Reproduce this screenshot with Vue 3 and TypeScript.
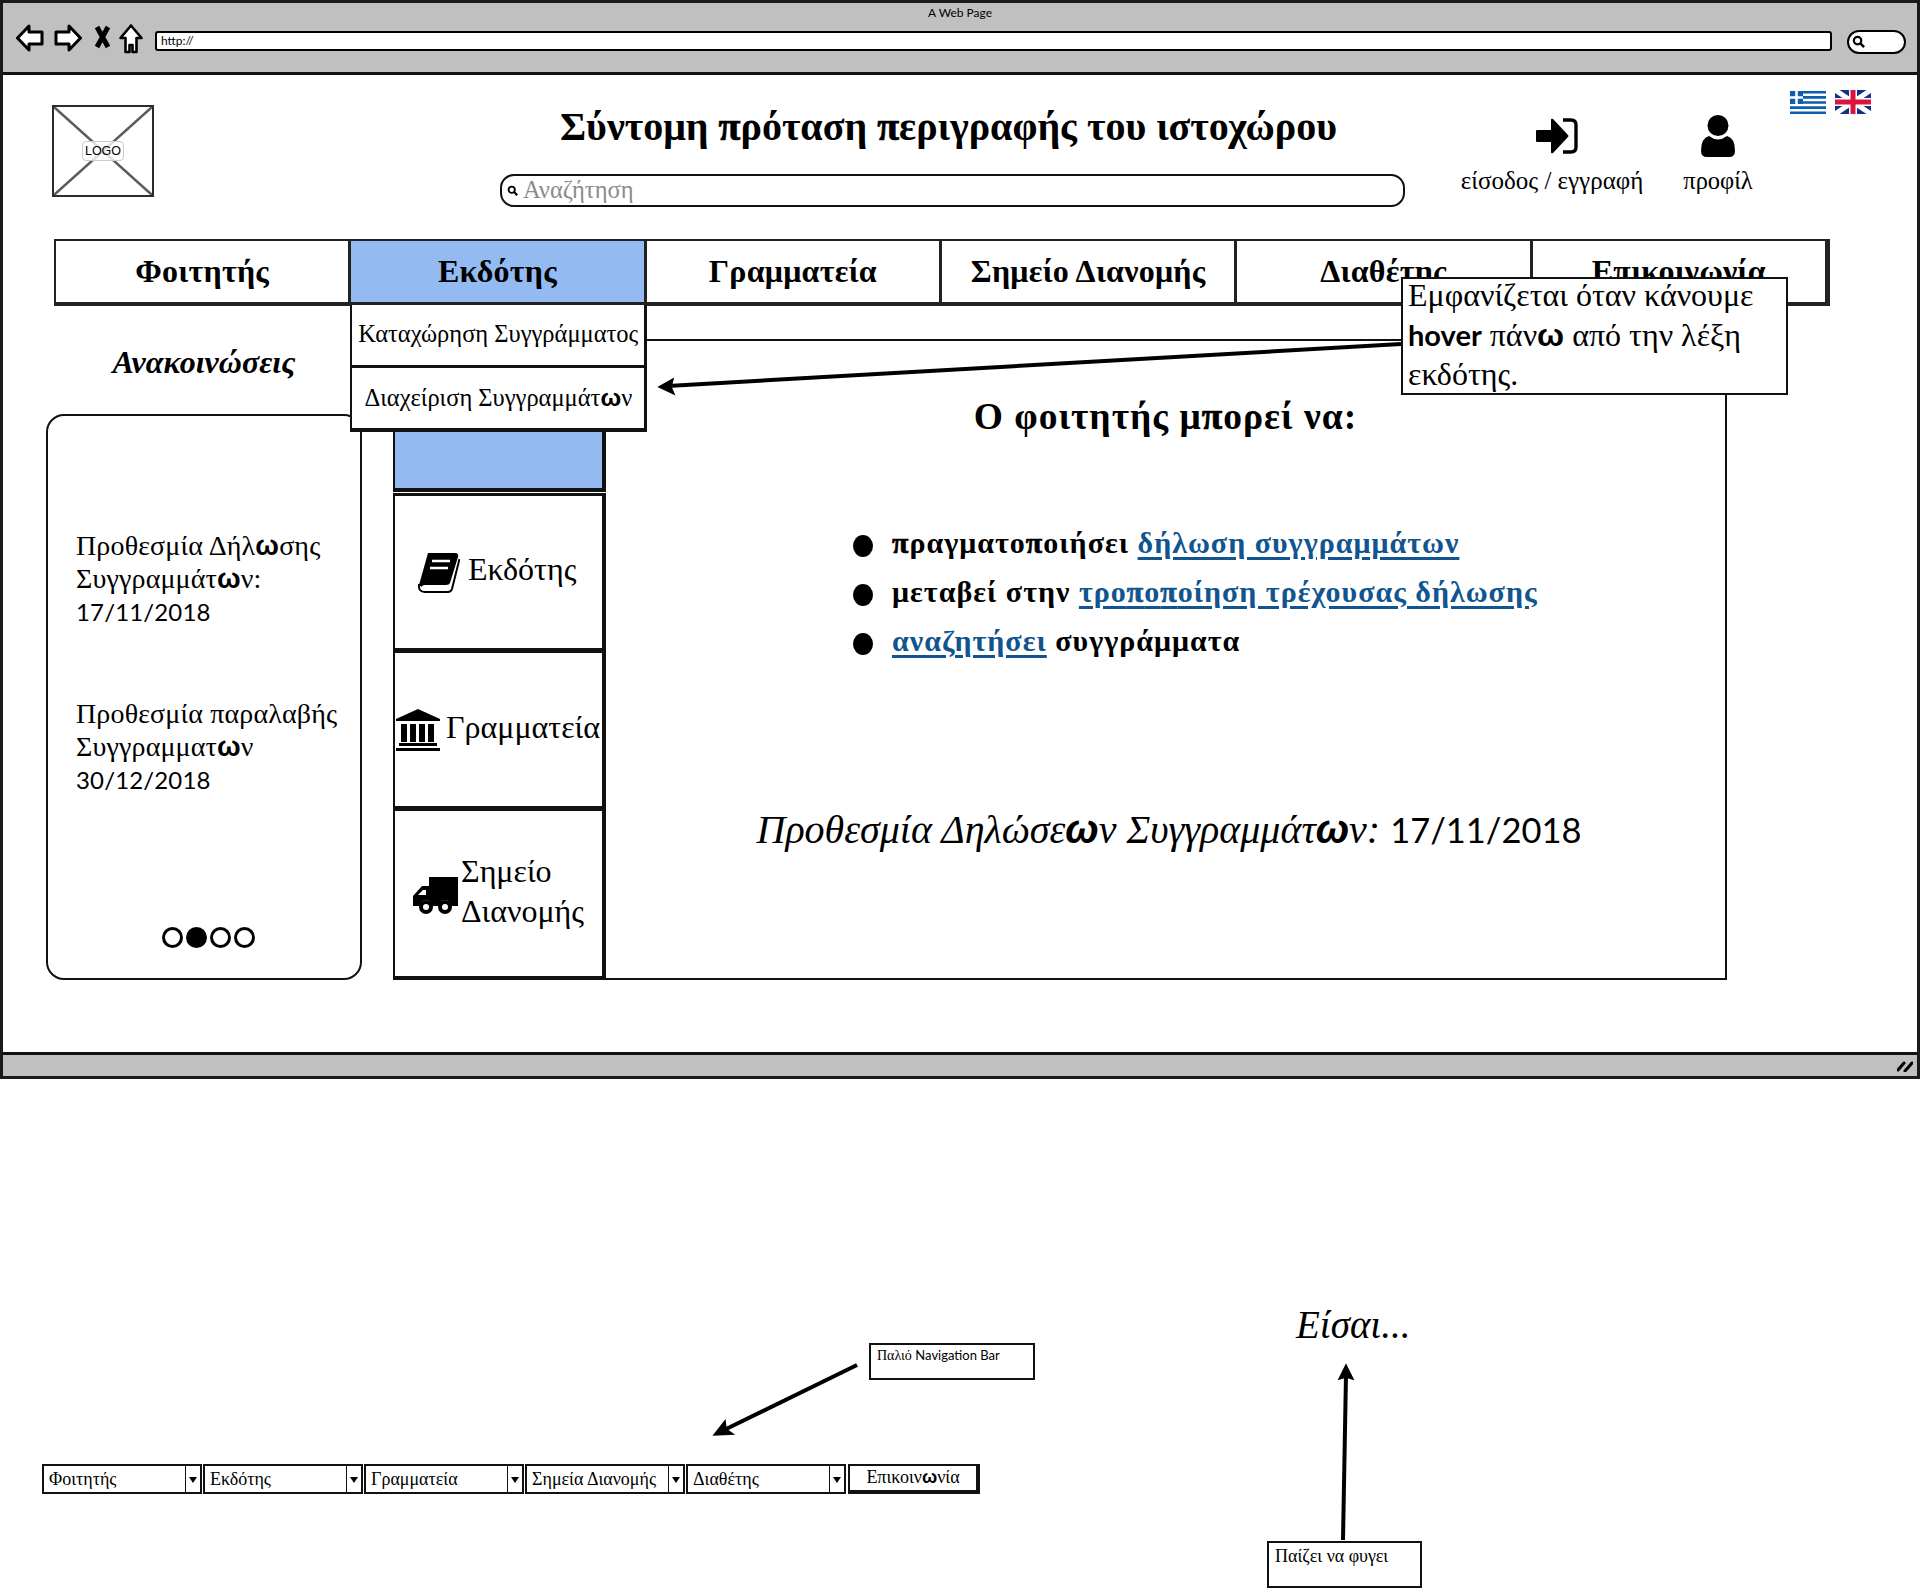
<script setup lang="ts">
const navItems: string[] = ['Φοιτητής', 'Εκδότης', 'Γραμματεία', 'Σημείο Διανομής', 'Διαθέτης', 'Επικοινωνία']
const combos: string[] = ['Φοιτητής', 'Εκδότης', 'Γραμματεία', 'Σημεία Διανομής', 'Διαθέτης']
const dots: boolean[] = [false, true, false, false]
</script>

<template>
  <div class="page">
    <section class="window">
      <header class="chrome">
        <div class="chrome-title">A Web Page</div>
        <div class="chrome-row">
          <svg class="ic-back" viewBox="0 0 28 28"><path d="M1.5 14 L13 2 V8 H26 V20 H13 V26 Z" fill="#fff" stroke="#000" stroke-width="3" stroke-linejoin="round" /></svg>
          <svg class="ic-fwd" viewBox="0 0 28 28"><path d="M26.5 14 L15 2 V8 H2 V20 H15 V26 Z" fill="#fff" stroke="#000" stroke-width="3" stroke-linejoin="round" /></svg>
          <svg class="ic-x" viewBox="0 0 16 24"><path d="M2.5 2 L13.5 22 M13.5 2 L2.5 22" stroke="#000" stroke-width="5" fill="none" /></svg>
          <svg class="ic-home" viewBox="0 0 24 30"><path d="M12 1.5 L22.5 14 H17.5 V28 H13.5 V21 H10.5 V28 H6.5 V14 H1.5 Z" fill="#fff" stroke="#000" stroke-width="2.6" stroke-linejoin="round" /></svg>
          <div class="url">http://</div>
          <div class="pill">
            <svg viewBox="0 0 14 14"><circle cx="6" cy="6" r="4" fill="none" stroke="#000" stroke-width="2.4" /><path d="M9 9 L13 13" stroke="#000" stroke-width="2.8" /></svg>
          </div>
        </div>
      </header>

      <main class="content">
        <div class="masthead">
          <div class="logo">
            <svg viewBox="0 0 98 88" preserveAspectRatio="none"><path d="M0 0 L98 88 M98 0 L0 88" stroke="#5c5c5c" stroke-width="2.5" /></svg>
            <span>LOGO</span>
          </div>
          <div class="title-col">
            <h1>Σύντομη <b class="p">π</b>ρόταση <b class="p">π</b>εριγραφής του ιστοχώρου</h1>
            <div class="search">
              <svg viewBox="0 0 14 14"><circle cx="6" cy="6" r="4" fill="none" stroke="#000" stroke-width="2.4" /><path d="M9 9 L13 13" stroke="#000" stroke-width="2.8" /></svg>
              <span>Αναζήτηση</span>
            </div>
          </div>
          <div class="action login">
            <svg viewBox="0 0 42 36"><path d="M0 13 a1 1 0 0 1 1-1 H15 V2 Q15 0 17 1 L32 17 Q33 18 32 19 L17 35 Q15 36 15 34 V24 H1 a1 1 0 0 1 -1 -1 Z" fill="#000" /><path d="M27 2 H35 Q40 2 40 7 V29 Q40 34 35 34 H27" fill="none" stroke="#000" stroke-width="3.4" /></svg>
            <span>είσοδος / εγγραφή</span>
          </div>
          <div class="action profile">
            <svg viewBox="0 0 34 42"><circle cx="17" cy="10.5" r="10.5" fill="#000" /><path d="M8 21 Q17 28 26 21 Q34 23 34 36 Q34 42 28 42 H6 Q0 42 0 36 Q0 23 8 21 Z" fill="#000" /></svg>
            <span>προφίλ</span>
          </div>
          <div class="flags">
            <svg viewBox="0 0 36 23" class="flag-gr">
              <rect width="36" height="23" fill="#fff" />
              <path d="M0 1.3 H36 M0 6.4 H36 M0 11.5 H36 M0 16.6 H36 M0 21.7 H36" stroke="#0d5eaf" stroke-width="2.6" />
              <rect width="13" height="13" fill="#0d5eaf" />
              <path d="M6.5 0 V13 M0 6.5 H13" stroke="#fff" stroke-width="2.6" />
            </svg>
            <svg viewBox="0 0 36 24" class="flag-uk">
              <rect width="36" height="24" fill="#12308a" />
              <path d="M0 0 L36 24 M36 0 L0 24" stroke="#fff" stroke-width="5" />
              <path d="M18 0 V24 M0 12 H36" stroke="#fff" stroke-width="8" />
              <path d="M18 0 V24 M0 12 H36" stroke="#d8163c" stroke-width="5" />
            </svg>
          </div>
        </div>

        <nav class="nav">
          <div v-for="item in navItems" :key="item" class="nav-item" :class="{ active: item === 'Εκδότης' }">
            {{ item }}
            <div v-if="item === 'Εκδότης'" class="dropdown">
              <div class="drop-row">Καταχώρηση Συγγράμματος</div>
              <div class="drop-row">Διαχείριση Συγγραμμάτ<b class="w">ω</b>ν</div>
            </div>
          </div>
        </nav>

        <div class="body">
          <aside class="news">
            <h2>Ανακοινώσεις</h2>
            <div class="panel">
              <p class="notice">Προθεσμία Δήλ<b class="w">ω</b>σης<br />Συγγραμμάτ<b class="w">ω</b>ν:<br /><span class="num">17/11/2018</span></p>
              <p class="notice second">Προθεσμία παραλαβής<br />Συγγραμματ<b class="w">ω</b>ν<br /><span class="num">30/12/2018</span></p>
              <div class="dots">
                <i v-for="(on, i) in dots" :key="i" :class="{ on }"></i>
              </div>
            </div>
          </aside>

          <div class="side">
            <div class="side-active"></div>
            <div class="side-row r1">
              <svg class="ic-book" viewBox="0 0 42 41"><path d="M10 1 H37 Q41 1 40 5 L32 31 Q31 33 28 33 H7 Q4 33 3.5 35 L1 33 Z" fill="#000" /><path d="M1 32 Q0 40 7 40 H30 Q33 40 34 37 L41.5 7" fill="none" stroke="#000" stroke-width="2" /><path d="M14 9 H32 M12 16 H30" stroke="#fff" stroke-width="2.6" /></svg>
              <span>Εκδότης</span>
            </div>
            <div class="side-row r2">
              <svg class="ic-bank" viewBox="0 0 44 42"><path d="M22 0 L44 10 V12 H0 V10 Z" fill="#000" /><path d="M5 15 H11 V33 H5 Z M14 15 H20 V33 H14 Z M23 15 H29 V33 H23 Z M32 15 H38 V33 H32 Z" fill="#000" /><path d="M3 34 H41 V37 H3 Z M0 39 H44 V42 H0 Z" fill="#000" /></svg>
              <span>Γραμματεία</span>
            </div>
            <div class="side-row r3">
              <svg class="ic-truck" viewBox="0 0 45 37"><path d="M16 0 H45 V29 H38 A6 6 0 0 0 26 29 H19 A6 6 0 0 0 7 29 H0 V19 L9 9 H16 Z" fill="#000" /><path d="M5 18 L10 13 H13 V18 Z" fill="#fff" /><circle cx="13" cy="30" r="5" fill="#fff" stroke="#000" stroke-width="4" /><circle cx="32" cy="30" r="5" fill="#fff" stroke="#000" stroke-width="4" /></svg>
              <span>Σημείο<br />Διανομής</span>
            </div>
          </div>

          <article class="main">
            <h2>Ο φοιτητής μ<b class="p">π</b>ορεί να:</h2>
            <ul>
              <li><i></i><span><b class="p">π</b>ραγματο<b class="p">π</b>οιήσει <a>δήλωση συγγραμμάτων</a></span></li>
              <li><i></i><span>μεταβεί στην <a>τρο<b class="p">π</b>ο<b class="p">π</b>οίηση τρέχουσας δήλωσης</a></span></li>
              <li><i></i><span><a>αναζητήσει</a> συγγράμματα</span></li>
            </ul>
            <p class="deadline">Προθεσμία Δηλώσε<b class="w">ω</b>ν Συγγραμμάτ<b class="w">ω</b>ν: <span class="num">17/11/2018</span></p>
          </article>
        </div>
      </main>

      <footer class="status">
        <svg viewBox="0 0 16 12"><path d="M1 10 L7 3 M8 11 L15 3" stroke="#000" stroke-width="3" stroke-linecap="round" /></svg>
      </footer>
    </section>

    <section class="below">
      <div class="old-nav">
        <div v-for="c in combos" :key="c" class="combo">
          <span>{{ c }}</span>
          <i></i>
        </div>
        <div class="old-btn">Επικοιν<b class="w">ω</b>νία</div>
      </div>
    </section>

    <div class="tooltip"><div class="tip-text">Εμφανίζεται όταν κάνουμε<br /><span class="sans">hover</span> πάν<b class="w">ω</b> από την λέξη<br />εκδότης.</div></div>
    <div class="note note-old">Παλιό <span class="sans-n">Navigation Bar</span></div>
    <div class="note note-leave">Παίζει να φυγει</div>
    <div class="youare">Είσαι...</div>

    <svg class="arrows" viewBox="0 0 1920 1589">
      <path d="M1401 344 L668 386" stroke="#000" stroke-width="4" fill="none" />
      <path d="M659 387 L673 379 L671 387 L674 394 Z" fill="#000" stroke="#000" stroke-width="1.5" />
      <path d="M857 1365 L722 1431" stroke="#000" stroke-width="4" fill="none" />
      <path d="M714 1435 L725 1421 L726 1429 L733 1434 Z" fill="#000" stroke="#000" stroke-width="1.5" />
      <path d="M1343 1540 L1346 1374" stroke="#000" stroke-width="4" fill="none" />
      <path d="M1346 1365 L1353 1379 L1346 1377 L1339 1379 Z" fill="#000" stroke="#000" stroke-width="1.5" />
    </svg>
  </div>
</template>

<style scoped>
.page {
  position: relative;
  width: 1920px;
  height: 1589px;
  overflow: hidden;
  background: #fff;
  color: #000;
  font-family: "Liberation Serif", "Times New Roman", serif;
}
h1, h2, p, ul { margin: 0; padding: 0; }
.w { font-family: "Liberation Sans", sans-serif; font-weight: 700; }
.p { -webkit-text-stroke: 0.7px currentColor; }
.num { font-family: "Lato", "Liberation Sans", sans-serif; font-style: normal; }

.window {
  box-sizing: border-box;
  width: 1920px;
  height: 1079px;
  border: 3px solid #1a1a1a;
  display: flex;
  flex-direction: column;
}
.chrome {
  position: relative;
  height: 69px;
  flex: none;
  background: #c0c0c0;
  border-bottom: 3px solid #111;
}
.chrome-title {
  text-align: center;
  font: 12px/14px "Lato", "Liberation Sans", sans-serif;
  padding-top: 3px;
}
.chrome-row {
  display: flex;
  align-items: flex-start;
  padding: 4px 11px 0 13px;
  height: 32px;
}
.ic-back { width: 28px; height: 28px; }
.ic-fwd { width: 28px; height: 28px; margin-left: 10px; }
.ic-x { width: 17px; height: 24px; margin-left: 12px; margin-top: 1px; }
.ic-home { width: 24px; height: 30px; margin-left: 8px; }
.url {
  box-sizing: border-box;
  width: 1677px;
  height: 20px;
  margin-left: 12px;
  margin-top: 7px;
  background: #fff;
  border: 2.5px solid #000;
  border-radius: 3px;
  font: 12px/15px "Lato", "Liberation Sans", sans-serif;
  padding-left: 4px;
}
.pill {
  box-sizing: border-box;
  width: 59px;
  height: 24px;
  margin-left: 15px;
  margin-top: 6px;
  background: #fff;
  border: 2.5px solid #000;
  border-radius: 12px;
  padding: 3px 0 0 3px;
}
.pill svg { display: block; width: 13px; height: 13px; }

.content { flex: 1; min-height: 0; }

.masthead { display: flex; height: 164px; padding-left: 49px; }
.logo {
  position: relative;
  box-sizing: border-box;
  width: 102px;
  height: 92px;
  margin-top: 30px;
  border: 2.5px solid #2c2c2c;
  display: flex;
  align-items: center;
  justify-content: center;
}
.logo svg { position: absolute; inset: 0; width: 100%; height: 100%; }
.logo span {
  position: relative;
  font: 12.5px/18px "Liberation Sans", sans-serif;
  padding: 0 2px;
  background: rgba(255, 255, 255, 0.8);
  border: 1px solid #ccc;
  border-radius: 4px;
}
.title-col { width: 905px; margin-left: 346px; }
h1 {
  text-align: center;
  font-size: 40px;
  line-height: 46px;
  font-weight: 700;
  margin-top: 29px;
  margin-right: 8px;
}
.search {
  box-sizing: border-box;
  height: 33px;
  margin-top: 24px;
  border: 2.5px solid #111;
  border-radius: 14px;
  display: flex;
  align-items: center;
  padding-left: 5px;
}
.search svg { width: 11px; height: 11px; margin-right: 5px; }
.search span { font-size: 24.5px; line-height: 28px; color: #8b8b8b; margin-top: -2px; }
.action { display: flex; flex-direction: column; align-items: center; font-size: 25px; line-height: 30px; white-space: nowrap; }
.login { width: 186px; margin-left: 54px; padding-top: 43px; }
.login svg { width: 42px; height: 36px; margin-bottom: 12px; margin-left: 10px; }
.profile { width: 70px; margin-left: 38px; padding-top: 40px; font-size: 24.5px; }
.profile svg { width: 34px; height: 42px; margin-bottom: 9px; }
.flags { display: flex; gap: 9px; margin-left: 37px; padding-top: 15px; align-items: flex-start; }
.flag-gr { width: 36px; height: 23px; margin-top: 1px; }
.flag-uk { width: 36px; height: 24px; }

.nav { display: flex; margin-left: 51px; width: 1776px; height: 67px; }
.nav-item {
  position: relative;
  box-sizing: border-box;
  flex: 1;
  border: 2px solid #222;
  border-bottom-width: 4px;
  text-align: center;
  font-size: 32px;
  line-height: 60px;
  font-weight: 700;
  letter-spacing: 0.25px;
}
.nav-item + .nav-item { border-left-width: 1px; }
.nav-item:last-child { border-right-width: 5px; }
.nav-item.active { background: #93baf1; }
.dropdown {
  position: absolute;
  z-index: 2;
  left: -1px;
  top: 100%;
  margin-top: 3px;
  width: 297px;
  box-sizing: border-box;
  background: #fff;
  border-right: 3.5px solid #111;
  border-left: 2px solid #111;
  border-bottom: 4px solid #111;
  font-size: 24.5px;
  font-weight: 400;
  letter-spacing: 0;
}
.drop-row { height: 60px; line-height: 58px; white-space: nowrap; }
.drop-row + .drop-row { border-top: 3px solid #111; height: 63px; line-height: 60px; box-sizing: border-box; }

.body { display: flex; padding-left: 43px; height: 674px; }
.news { width: 316px; flex: none; display: flex; flex-direction: column; }
.news h2 {
  height: 108px;
  text-align: center;
  font-size: 32px;
  line-height: 112px;
  font-style: italic;
  font-weight: 700;
}
.panel {
  position: relative;
  flex: 1;
  box-sizing: border-box;
  border: 2px solid #111;
  border-radius: 18px;
  padding: 113px 0 0 28px;
}
.notice { font-size: 28px; line-height: 33px; letter-spacing: 0.15px; }
.notice .num { font-size: 24px; }
.notice.second { margin-top: 69px; }
.dots {
  position: absolute;
  left: 114px;
  bottom: 30px;
  display: flex;
  gap: 3px;
}
.dots i {
  box-sizing: border-box;
  width: 21px;
  height: 21px;
  border: 3px solid #000;
  border-radius: 50%;
}
.dots i.on { background: #000; }

.side { width: 213px; margin-left: 31px; flex: none; margin-top: 99px; }
.side-active {
  box-sizing: border-box;
  height: 87px;
  background: #93baf1;
  border-right: 4px solid #111;
  border-left: 2px solid #111;
  border-bottom: 4px solid #111;
}
.side-row {
  box-sizing: border-box;
  display: flex;
  align-items: center;
  font-size: 32px;
  line-height: 40px;
  border: 2px solid #111;
  border-top-width: 3px;
  border-right-width: 4px;
}
.r1 { height: 157px; padding-left: 23px; margin-top: 1px; }
.r2 { height: 158px; padding-left: 1px; }
.r3 { height: 172px; padding-left: 18px; border-bottom-width: 4px; }
.ic-book { width: 42px; height: 41px; margin-right: 8px; }
.ic-bank { width: 44px; height: 42px; margin-right: 6px; flex: none; }
.ic-truck { width: 45px; height: 37px; margin-right: 3px; margin-top: 3px; flex: none; }
.r1 span, .r2 span { margin-top: -6px; white-space: nowrap; }
.r3 span { margin-top: -5px; }

.main {
  flex: 1;
  max-width: 1121px;
  box-sizing: border-box;
  margin-top: 33px;
  height: 641px;
  border: 2.5px solid #111;
  border-left: 0;
}
.main h2 {
  text-align: center;
  font-size: 37.5px;
  line-height: 44px;
  font-weight: 700;
  letter-spacing: 1px;
  margin-top: 54px;
}
.main ul { list-style: none; margin: 82px 0 0 247px; }
.main li {
  display: flex;
  align-items: center;
  font-size: 30px;
  line-height: 44px;
  font-weight: 700;
  letter-spacing: 1px;
  white-space: pre;
  margin-bottom: 5px;
}
.main li i {
  width: 20px;
  height: 22px;
  border-radius: 50%;
  background: #000;
  margin: 5px 19px 0 0;
}
.main a { color: #10558f; text-decoration: underline; text-decoration-thickness: 2.5px; text-underline-offset: 4px; }
.deadline {
  text-align: center;
  font-size: 40px;
  line-height: 50px;
  font-style: italic;
  margin-top: 141px;
  padding-left: 7px;
}
.deadline .num { font-size: 34.5px; }

.status {
  position: relative;
  flex: none;
  height: 21px;
  background: #c0c0c0;
  border-top: 3px solid #111;
}
.status svg { position: absolute; right: 4px; top: 5px; width: 16px; height: 12px; }

.old-nav { display: flex; margin: 385px 0 0 42px; }
.combo {
  box-sizing: border-box;
  display: flex;
  justify-content: space-between;
  width: 160px;
  height: 30px;
  margin-right: 1px;
  border: 2px solid #111;
  font-size: 18px;
  line-height: 26px;
  padding-left: 5px;
  position: relative;
}
.combo i {
  width: 14px;
  border-left: 1.5px solid #111;
  position: relative;
}
.combo i::after {
  content: '';
  position: absolute;
  left: 3px;
  top: 11px;
  border: 4.5px solid transparent;
  border-top: 6px solid #000;
  border-bottom: 0;
}
.old-btn {
  box-sizing: border-box;
  width: 132px;
  height: 30px;
  margin-left: 1px;
  border: 2px solid #111;
  border-bottom-width: 4px;
  border-right-width: 4px;
  text-align: center;
  font-size: 18px;
  line-height: 22px;
}

.tooltip {
  position: absolute;
  z-index: 3;
  left: 1401px;
  top: 277px;
  box-sizing: border-box;
  width: 387px;
  height: 118px;
  padding: 2px 0 0 5px;
  background: #fff;
  border: 2px solid #111;
  font-size: 32px;
  line-height: 39px;
  white-space: nowrap;
}
.tip-text { margin-top: -5px; }
.sans { font-family: "Lato", "Liberation Sans", sans-serif; font-size: 29px; font-weight: 700; }
.note {
  position: absolute;
  box-sizing: border-box;
  background: #fff;
  border: 2px solid #111;
  white-space: nowrap;
}
.note-old {
  left: 869px;
  top: 1343px;
  width: 166px;
  height: 37px;
  padding: 1px 0 0 6px;
  font-size: 14px;
  line-height: 18px;
}
.sans-n { font-family: "Lato", "Liberation Sans", sans-serif; font-size: 13px; }
.note-leave {
  left: 1267px;
  top: 1541px;
  width: 155px;
  height: 47px;
  padding: 1px 0 0 6px;
  font-size: 18px;
  line-height: 24px;
}
.youare {
  position: absolute;
  left: 1296px;
  top: 1301px;
  font-size: 39px;
  line-height: 48px;
  font-style: italic;
}
.arrows { position: absolute; z-index: 2; inset: 0; width: 1920px; height: 1589px; pointer-events: none; }
</style>
